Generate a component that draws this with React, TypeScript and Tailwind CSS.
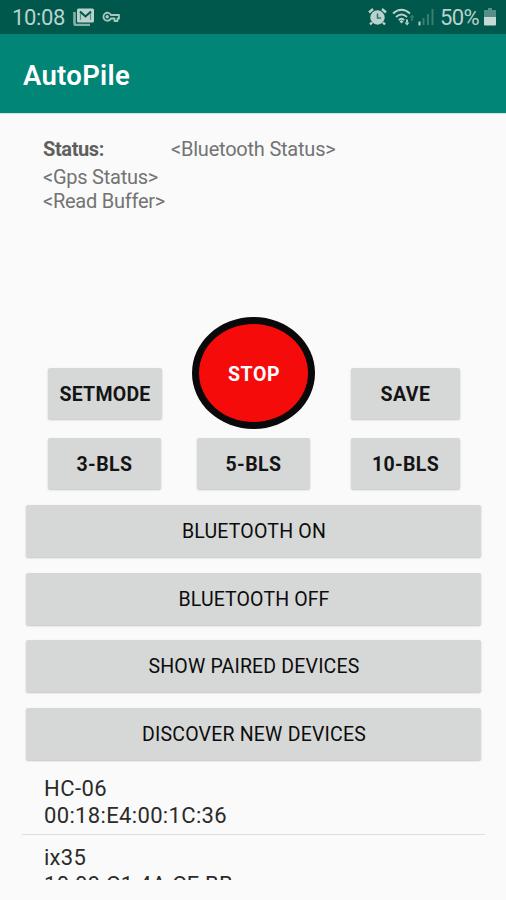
import React from "react";

type LabelProps = { children: string; width: number; className?: string };

// Single-line label stretched to a fixed advance so glyph runs keep their measured width.
function Label({ children, width, className = "" }: LabelProps) {
  const ref = React.useRef<HTMLSpanElement>(null);
  const [spacing, setSpacing] = React.useState(0);
  React.useLayoutEffect(() => {
    if (!ref.current) return;
    const natural = ref.current.getBoundingClientRect().width;
    setSpacing((width - natural) / children.length);
  }, []);
  return (
    <span ref={ref} className={`inline-block whitespace-pre ${className}`} style={{ letterSpacing: spacing }}>
      {children}
    </span>
  );
}

const shadow = "shadow-[0_1px_2px_rgba(0,0,0,0.22)]";

function PadButton({ label, width, text }: { label: string; width: string; text: number }) {
  return (
    <button className={`flex h-full items-center justify-center rounded-[2px] bg-[#d6d8d7] pt-[3px] font-bold text-[#141414] ${shadow} ${width}`}>
      <Label width={text} className="text-[19.500px] leading-6">{label}</Label>
    </button>
  );
}

const actions = [
  { label: "BLUETOOTH ON", width: 144 },
  { label: "BLUETOOTH OFF", width: 151 },
  { label: "SHOW PAIRED DEVICES", width: 211 },
  { label: "DISCOVER NEW DEVICES", width: 224 },
];

function StatusBar() {
  return (
    <header className="flex h-[34px] shrink-0 items-center bg-[#00574b] pl-3 text-[#b9d2cd]">
      <Label width={53} className="pt-px text-[22px] leading-[34px]">10:08</Label>
      <svg className="ml-2 h-[18px] w-[22px]" viewBox="0 0 22 18">
        <path d="M1.500 4v11.500a1.500 1.500 0 0 0 1.500 1.500H17" fill="none" stroke="#86b0a8" strokeWidth="2.600" />
        <rect x="4" y="0.500" width="17" height="14" rx="1.500" fill="#b9d2cd" />
        <path d="M7.500 12V4.500M17.500 12V4.500" fill="none" stroke="#5f9288" strokeWidth="1.200" />
        <path d="m7 3.500 5.500 5 5.500-5" fill="none" stroke="#00574b" strokeWidth="2" />
      </svg>
      <svg className="ml-[7px] h-3 w-[18px]" viewBox="0 0 18 12" fill="none" stroke="#a9c7c1" strokeWidth="1.800">
        <path d="M9 4H17v3.500h-1.500v2.500h-3V7.500H9a4 4 0 1 1 0-3.500Z" strokeLinejoin="round" />
        <circle cx="5.200" cy="5.800" r="0.900" />
      </svg>
      <svg className="ml-auto h-[18px] w-[19px]" viewBox="0 0 19 18">
        <circle cx="9.500" cy="9.500" r="7.200" fill="#b9d2cd" />
        <path d="M1 4.500 5 1M18 4.500 14 1M4 14.500l-2 2M15 14.500l2 2" stroke="#b9d2cd" strokeWidth="2.400" />
        <path d="M9.500 5.500v4.500h3.500" fill="none" stroke="#2f7469" strokeWidth="1.500" />
      </svg>
      <svg className="ml-[5px] h-[18px] w-6" viewBox="0 0 24 18" fill="none" stroke="#b9d2cd" strokeWidth="1.900">
        <path d="M1 5.500Q9.500-2 18 5.500M4 9q5.500-5 11 0M6.800 12q2.700-2.500 5.400 0" />
        <path d="m9.500 12 2 1.500-2 2-2-2Z" fill="#b9d2cd" stroke="none" />
        <path d="M15 11.500v3" />
        <path d="m15 17.500-2.500-3h5Z" fill="#b9d2cd" stroke="none" />
        <path d="M20 8v5" stroke="#347a6f" />
        <path d="m20 6.500-2.500 3h5Z" fill="#347a6f" stroke="none" />
      </svg>
      <svg className="ml-[2px] h-[18px] w-4" viewBox="0 0 16 18">
        <path d="M1.500 13.500v4" stroke="#b9d2cd" strokeWidth="2" />
        <path d="M5.500 10v7M10 6v11M14.500 1v16" stroke="#3b7d73" strokeWidth="2" />
      </svg>
      <Label width={39} className="ml-[6px] mr-px pt-px text-[22px] leading-[34px]">50%</Label>
      <svg className="ml-1 mr-[10px] h-[18px] w-3" viewBox="0 0 12 18">
        <path d="M4 0h4v2h4v7H0V2h4Z" fill="#568f86" />
        <path d="M0 9h12v7.500a1 1 0 0 1-1 1H1a1 1 0 0 1-1-1Z" fill="#c3dad6" />
      </svg>
    </header>
  );
}

export default function App() {
  return (
    <main className="flex h-[900px] w-[506px] flex-col overflow-hidden bg-[#fafafa] font-[Roboto,sans-serif]">
      <StatusBar />
      <div className="flex h-[79px] shrink-0 items-center bg-[#008577] pl-[23px] pt-[5px] text-white shadow-[0_1px_1px_#d5e4e1]">
        <Label width={107} className="text-[27.500px] font-semibold leading-8">AutoPile</Label>
      </div>
      <section className="h-[204px] shrink-0 pl-[43px] pt-6 text-[20px] text-[#737373]">
        <div className="flex h-6 items-center">
          <div className="w-32"><Label width={61} className="font-bold text-[#5f5f5f]">Status:</Label></div>
          <Label width={164.5}>{"<Bluetooth Status>"}</Label>
        </div>
        <div className="mt-1 flex h-6 items-center"><Label width={115}>{"<Gps Status>"}</Label></div>
        <div className="flex h-6 items-center"><Label width={122}>{"<Read Buffer>"}</Label></div>
      </section>
      <section className="flex h-[112px] shrink-0 pl-12">
        <div className="mt-[51px] h-[51px]"><PadButton label="SETMODE" width="w-[114px]" text={91} /></div>
        <button className="ml-[30px] flex h-[112px] w-[123px] items-center justify-center rounded-[50%] border-[7px] border-[#090909] bg-[#f60b0b] pl-px pt-[3px] font-bold text-white">
          <Label width={52} className="text-[19.500px]">STOP</Label>
        </button>
        <div className="ml-[36px] mt-[51px] h-[51px]"><PadButton label="SAVE" width="w-[109px]" text={50} /></div>
      </section>
      <section className="mt-[9px] flex h-[51px] shrink-0 pl-12">
        <PadButton label="3-BLS" width="w-[113px]" text={56} />
        <div className="ml-9"><PadButton label="5-BLS" width="w-[113px]" text={56} /></div>
        <div className="ml-[41px]"><PadButton label="10-BLS" width="w-[109px]" text={67} /></div>
      </section>
      <section className="mx-[26px] mt-4 flex shrink-0 flex-col gap-[15.600px]">
        {actions.map((a) => (
          <button key={a.label} className={`flex h-[52px] w-[455px] items-center justify-center rounded-[2px] bg-[#d6d8d7] pl-px pt-[2px] text-[#0c0c0c] ${shadow}`}>
            <Label width={a.width} className="text-[19.500px] leading-6">{a.label}</Label>
          </button>
        ))}
      </section>
      <section className="ml-[22px] h-[120px] w-[463px] shrink-0 overflow-hidden text-[22px] leading-[27px] text-[#2b2b2b]">
        <div className="flex h-[75px] flex-col border-b border-[#dedede] pl-[22px] pt-[15px]">
          <div><Label width={63}>HC-06</Label></div>
          <div><Label width={183}>00:18:E4:00:1C:36</Label></div>
        </div>
        <div className="flex flex-col pl-[22px] pt-[9px]">
          <div><Label width={42}>ix35</Label></div>
          <div><Label width={189}>10:09:C1:4A:CF:BB</Label></div>
        </div>
      </section>
    </main>
  );
}
